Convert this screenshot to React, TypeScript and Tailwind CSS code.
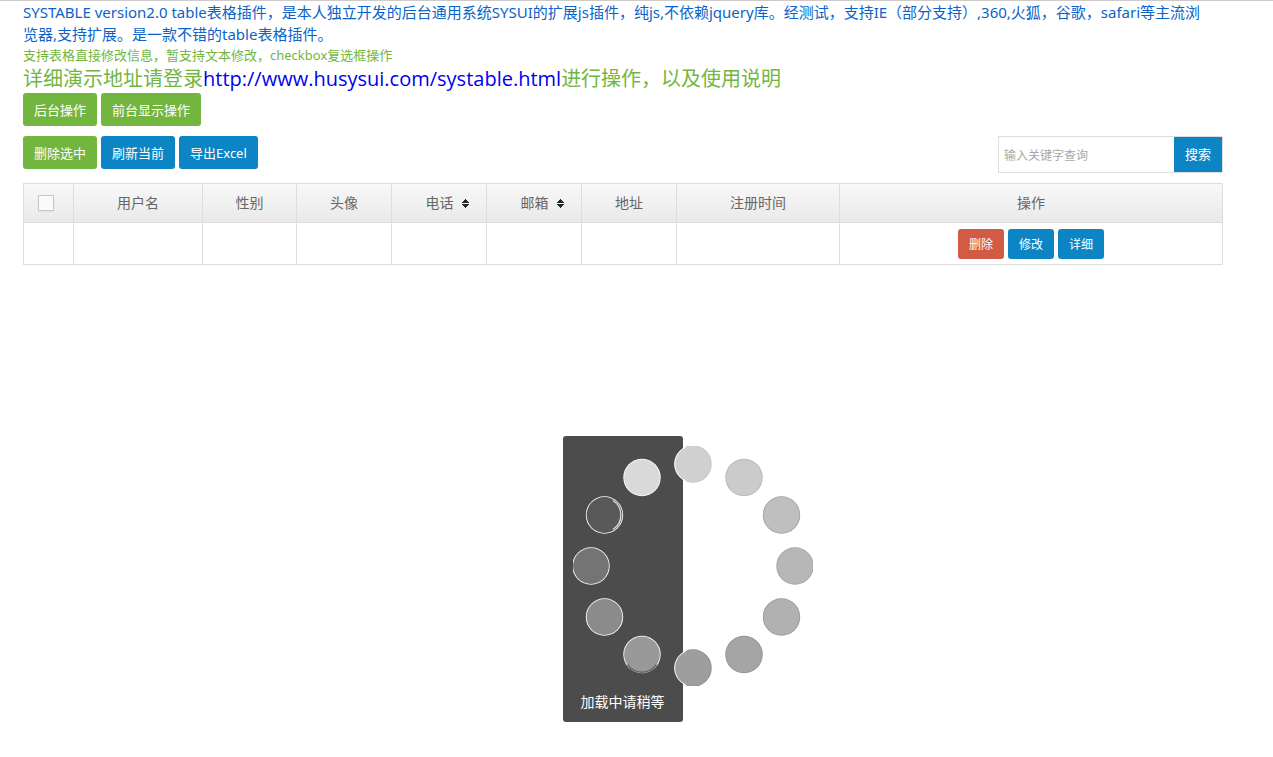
import { useState } from "react";

type Column = {
  title: string;
  width?: string;
  sortable?: boolean;
};

const columns: Column[] = [
  { title: "用户名", width: "w-[129px]" },
  { title: "性别", width: "w-[94px]" },
  { title: "头像", width: "w-[95px]" },
  { title: "电话", width: "w-[95px]", sortable: true },
  { title: "邮箱", width: "w-[95px]", sortable: true },
  { title: "地址", width: "w-[95px]" },
  { title: "注册时间", width: "w-[163px]" },
  { title: "操作" },
];

// clockwise from the top
const dots = [
  { cx: 120, cy: 18, fill: "#d0d0d0", rim: "#c4c4c4" },
  { cx: 171, cy: 31.5, fill: "#cbcbcb", rim: "#b4b4b4" },
  { cx: 208.5, cy: 69, fill: "#bfbfbf", rim: "#a0a0a0" },
  { cx: 222, cy: 120, fill: "#b7b7b7", rim: "#a4a4a4" },
  { cx: 208.5, cy: 171, fill: "#b1b1b1", rim: "#989898" },
  { cx: 171, cy: 208.5, fill: "#a5a5a5", rim: "#8e8e8e" },
  { cx: 120, cy: 222, fill: "#9e9e9e", rim: "#8c8c8c" },
  { cx: 69, cy: 208.5, fill: "#999999", rim: "#ffffff" },
  { cx: 31.5, cy: 171, fill: "#8b8b8b", rim: "#ffffff" },
  { cx: 18, cy: 120, fill: "#747474", rim: "#ffffff" },
  { cx: 31.5, cy: 69, fill: "#595959", rim: "#ffffff" },
  { cx: 69, cy: 31.5, fill: "#d9d9d9", rim: "#ffffff" },
];

const btn = "h-[33px] rounded-[3px] px-[11px] pt-0.5 text-[13px] text-white";
const smallBtn = "h-[30px] rounded-[3px] px-[11px] pt-0.5 text-xs text-white";

function SortIcon() {
  return (
    <svg width="7" height="9" viewBox="0 0 7 9" fill="#222b2b" shapeRendering="crispEdges">
      <path d="M3 0h1v1h1v1h1v1h1v1H0V3h1V2h1V1h1zM0 5h7v1H6v1H5v1H4v1H3V8H2V7H1V6H0z" />
    </svg>
  );
}

function Loading() {
  return (
    <div
      role="status"
      className="fixed bottom-[35px] left-1/2 -ml-[74px] w-[120px] rounded-[3px] bg-[#4c4c4c] px-[10px] pt-[10px] pb-1 text-center text-sm leading-8 text-white"
    >
      <svg width="240" height="240" viewBox="0 0 240 240" className="max-w-none">
        {dots.map((dot, i) => (
          <g key={i}>
            <circle cx={dot.cx} cy={dot.cy} r="18.7" fill={dot.rim} />
            <circle cx={dot.cx} cy={dot.cy} r="17.9" fill={dot.fill} />
          </g>
        ))}
        {/* white edge where the middle dots leave the panel */}
        <path d="M113 1a18.4 18.4 0 0 0 0 34M113 205a18.4 18.4 0 0 0 0 34" fill="none" stroke="#ffffff" />
        {/* shading on the two dots that are changing */}
        <path d="M40 54.5a17.3 17.3 0 0 1 0 29" fill="none" stroke="#d8d8d8" strokeWidth="1.4" />
        <path d="M54.5 218.5a17.5 17.5 0 0 0 29 0" fill="none" stroke="#666666" strokeWidth="1.4" />
      </svg>
      加载中请稍等
    </div>
  );
}

export default function App() {
  const [keyword, setKeyword] = useState("");
  const [checked, setChecked] = useState(false);

  return (
    <div className="min-h-screen border-t border-[#cfcaca] bg-white pr-[50px] pl-[23px] font-['Noto_Sans','Noto_Sans_CJK_SC',sans-serif]">
      <p className="text-[15px] leading-[22px] text-[#0a63c9]">
        SYSTABLE version2.0 table表格插件，是本人独立开发的后台通用系统SYSUI的扩展js插件，纯js,不依赖jquery库。经测试，支持IE（部分支持）,360,火狐，谷歌，safari等主流浏
        <br />
        览器,支持扩展。是一款不错的table表格插件。
      </p>
      <p className="text-[13px] leading-5 text-[#72b63f]">
        支持表格直接修改信息，暂支持文本修改，checkbox复选框操作
      </p>
      <p className="font-['Open_Sans','Noto_Sans_CJK_SC',sans-serif] text-xl leading-7 text-[#72b63f]">
        详细演示地址请登录
        <a href="http://www.husysui.com/systable.html" className="text-[#0000ee]">
          http://www.husysui.com/systable.html
        </a>
        进行操作，以及使用说明
      </p>

      <div className="flex gap-1">
        <button type="button" className={`${btn} bg-[#72b63f]`}>后台操作</button>
        <button type="button" className={`${btn} bg-[#72b63f]`}>前台显示操作</button>
      </div>

      <div className="mt-[10px] flex items-start justify-between">
        <div className="flex gap-1">
          <button type="button" className={`${btn} bg-[#72b63f]`}>删除选中</button>
          <button type="button" className={`${btn} bg-[#0d85c4]`}>刷新当前</button>
          <button type="button" className={`${btn} bg-[#0d85c4]`}>导出Excel</button>
        </div>
        <form className="flex h-[37px] border border-[#dddddd]" onSubmit={(e) => e.preventDefault()}>
          <input
            type="text"
            aria-label="输入关键字查询"
            className="w-[175px] px-[5px] pt-0.5 text-xs outline-none placeholder:text-[#a9a9a9]"
            value={keyword}
            onChange={(e) => setKeyword(e.target.value)}
            placeholder="输入关键字查询"
          />
          <button type="submit" className="bg-[#0d85c4] px-[11px] text-[13px] text-white">搜索</button>
        </form>
      </div>

      <table className="mt-[10px] w-full table-fixed border-collapse text-center text-sm text-[#666666]">
        <thead>
          <tr className="h-[39px] bg-linear-to-b from-[#f8f8f8] to-[#e9e9e9]">
            <th className="w-[50px] border border-[#dddddd] pr-1.5">
              <input
                type="checkbox"
                aria-label="全选"
                className="mx-auto block size-4 appearance-none border border-[#c8c8c8] bg-[#fafafa] shadow-xs checked:bg-[#0d85c4]"
                checked={checked}
                onChange={(e) => setChecked(e.target.checked)}
              />
            </th>
            {columns.map((col) => (
              <th key={col.title} className={`border border-[#dddddd] font-normal ${col.width ?? ""}`}>
                {col.sortable ? (
                  <button type="button" className="inline-flex items-center gap-2 pl-4">
                    {col.title}
                    <SortIcon />
                  </button>
                ) : (
                  col.title
                )}
              </th>
            ))}
          </tr>
        </thead>
        <tbody>
          <tr className="h-[42px]">
            <td className="border border-[#dddddd]" />
            {columns.slice(0, -1).map((col) => (
              <td key={col.title} className="border border-[#dddddd]" />
            ))}
            <td className="border border-[#dddddd]">
              <div className="flex justify-center gap-1">
                <button type="button" className={`${smallBtn} bg-[#d25b46]`}>删除</button>
                <button type="button" className={`${smallBtn} bg-[#0d85c4]`}>修改</button>
                <button type="button" className={`${smallBtn} bg-[#0d85c4]`}>详细</button>
              </div>
            </td>
          </tr>
        </tbody>
      </table>

      <Loading />
    </div>
  );
}
